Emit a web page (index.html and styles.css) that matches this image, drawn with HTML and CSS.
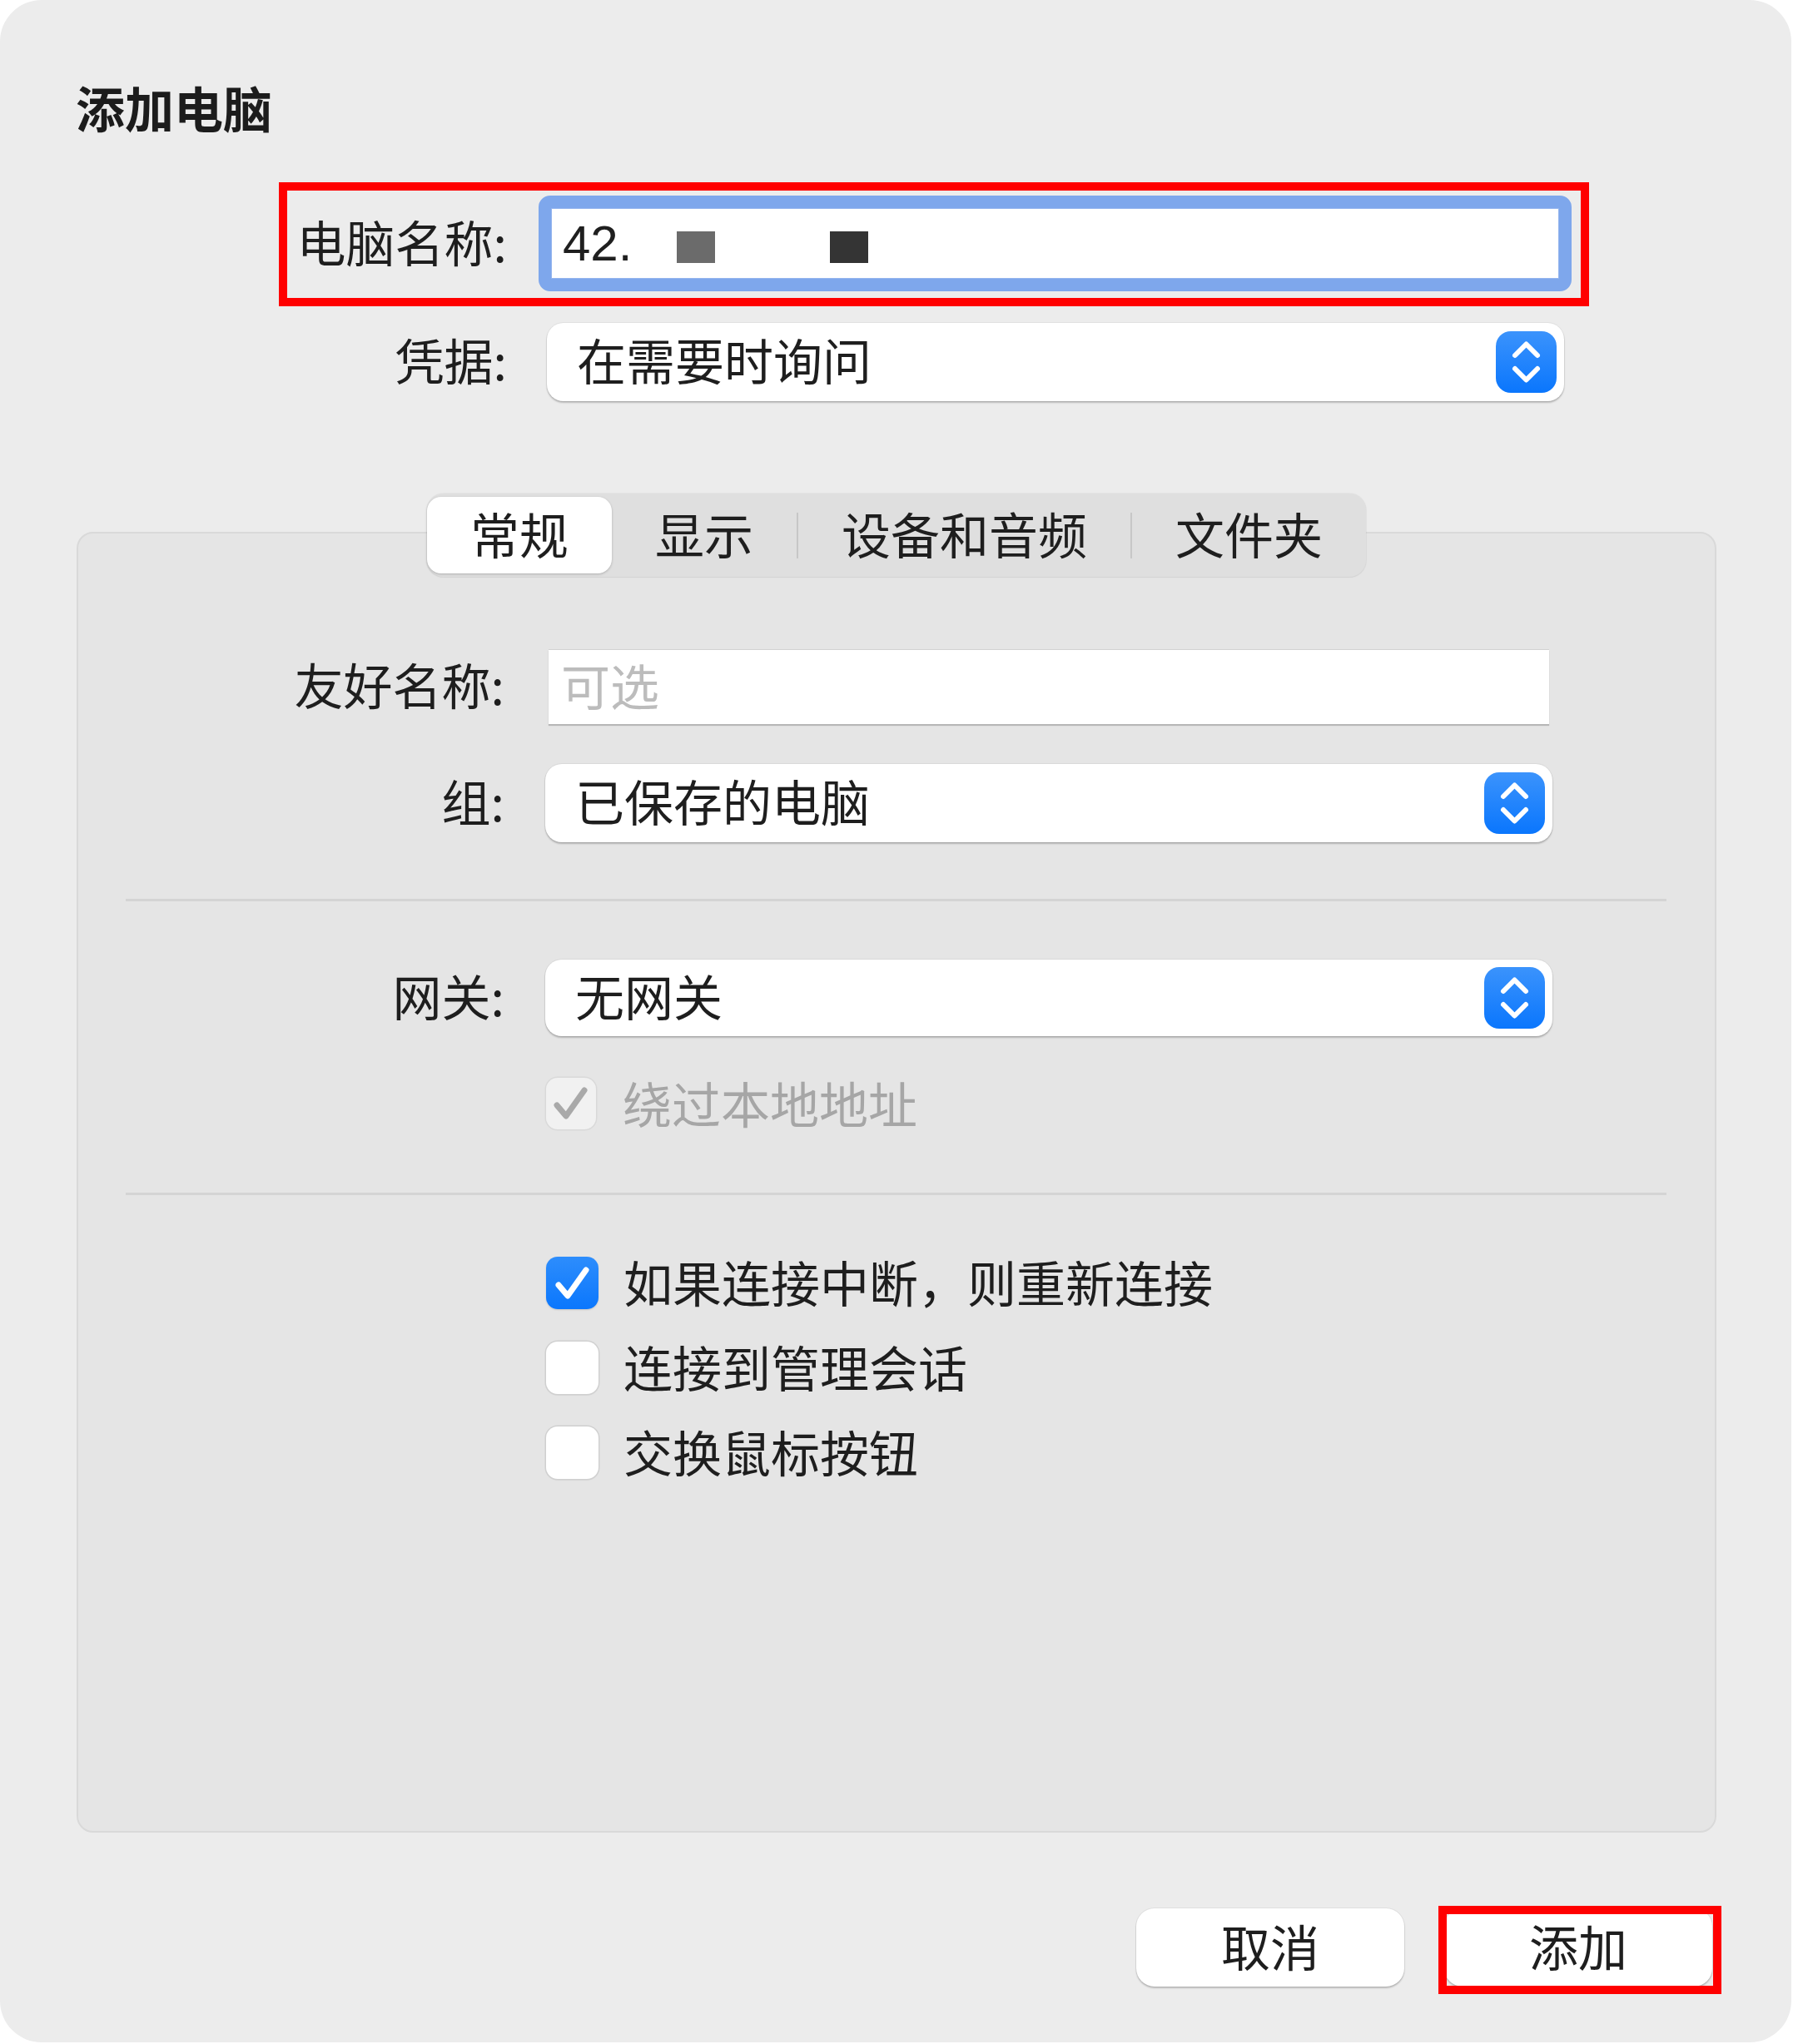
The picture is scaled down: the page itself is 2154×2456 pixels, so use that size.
FILE: index.html
```html
<!DOCTYPE html>
<html lang="zh-CN">
<head>
<meta charset="utf-8">
<title>添加电脑</title>
<link rel="stylesheet" href="styles.css">
</head>
<body>
<div class="dialog">
  <h1 class="title">添加电脑</h1>

  <div class="row top-row row-name">
    <span class="label">电脑名称:</span>
    <div class="namefield">
      <span class="ip">42.</span>
      <span class="redact redact-light"></span>
      <span class="redact redact-dark"></span>
    </div>
  </div>

  <div class="row top-row row-cred">
    <span class="label">凭据:</span>
    <div class="popup popup-cred">
      <span class="popup-text">在需要时询问</span>
      <span class="stepper"><svg width="73" height="74" viewBox="0 0 73 74"><path d="M23 29L36.5 15.5L50 29M23 45L36.5 58.5L50 45" fill="none" stroke="#fff" stroke-width="6" stroke-linecap="round" stroke-linejoin="round"/></svg></span>
    </div>
  </div>

  <div class="tabview">
    <div class="tabs">
      <div class="seg-control">
        <div class="seg active">常规</div>
        <div class="seg">显示</div>
        <i class="seg-sep"></i>
        <div class="seg">设备和音频</div>
        <i class="seg-sep"></i>
        <div class="seg">文件夹</div>
      </div>
    </div>

    <div class="panel">
      <div class="row row-friendly">
        <span class="label">友好名称:</span>
        <div class="textfield"><span class="placeholder">可选</span></div>
      </div>

      <div class="row row-group">
        <span class="label">组:</span>
        <div class="popup popup-panel">
          <span class="popup-text">已保存的电脑</span>
          <span class="stepper"><svg width="73" height="74" viewBox="0 0 73 74"><path d="M23 29L36.5 15.5L50 29M23 45L36.5 58.5L50 45" fill="none" stroke="#fff" stroke-width="6" stroke-linecap="round" stroke-linejoin="round"/></svg></span>
        </div>
      </div>

      <div class="separator sep-first"></div>

      <div class="row row-gateway">
        <span class="label">网关:</span>
        <div class="popup popup-panel popup-gateway">
          <span class="popup-text">无网关</span>
          <span class="stepper"><svg width="73" height="74" viewBox="0 0 73 74"><path d="M23 29L36.5 15.5L50 29M23 45L36.5 58.5L50 45" fill="none" stroke="#fff" stroke-width="6" stroke-linecap="round" stroke-linejoin="round"/></svg></span>
        </div>
      </div>

      <div class="check-row check-disabled">
        <span class="cb cb-disabled"><svg width="60" height="62" viewBox="0 0 60 62"><path d="M13 33L24 46L46 15" fill="none" stroke="#a9a9a9" stroke-width="7" stroke-linecap="round" stroke-linejoin="round"/></svg></span>
        <span class="cb-text">绕过本地地址</span>
      </div>

      <div class="separator sep-second"></div>

      <div class="check-row check-first">
        <span class="cb cb-on"><svg width="63" height="63" viewBox="0 0 63 63"><path d="M15 34L26 47L48 16" fill="none" stroke="#fff" stroke-width="7" stroke-linecap="round" stroke-linejoin="round"/></svg></span>
        <span class="cb-text">如果连接中断，则重新连接</span>
      </div>
      <div class="check-row check-next">
        <span class="cb cb-off"></span>
        <span class="cb-text">连接到管理会话</span>
      </div>
      <div class="check-row check-next">
        <span class="cb cb-off"></span>
        <span class="cb-text">交换鼠标按钮</span>
      </div>
    </div>
  </div>

  <div class="buttons">
    <div class="btn">取消</div>
    <div class="btn btn-add">添加</div>
  </div>
</div>
</body>
</html>
```

FILE: styles.css
```css
*, *::before, *::after { box-sizing: border-box; }

html, body {
  margin: 0;
  background: #ffffff;
}

body {
  font-family: "Noto Sans CJK SC", sans-serif;
  color: #1e1e1e;
}

.dialog {
  width: 2152px;
  height: 2454px;
  background: #ececec;
  border-radius: 50px;
  padding-top: 94px;
  display: flex;
  flex-direction: column;
}

.title {
  margin: 0 0 0 91px;
  font-size: 59px;
  font-weight: 700;
  line-height: 70px;
  color: #1c1c1c;
}

.row {
  display: flex;
  align-items: center;
}

.label {
  flex: none;
  text-align: right;
  font-size: 59px;
  line-height: 70px;
  padding-bottom: 6px;
  white-space: nowrap;
}

.top-row .label { width: 609px; }

/* computer name */
.row-name {
  margin-top: 71px;
  position: relative;
}

.row-name::after {
  content: "";
  position: absolute;
  left: 335px;
  top: -16px;
  width: 1574px;
  height: 149px;
  border: 10px solid #ff0000;
  pointer-events: none;
}

.namefield {
  margin-left: 38px;
  width: 1241px;
  height: 115px;
  border: 15px solid #7ea7ec;
  border-radius: 14px;
  background: #ffffff;
  box-shadow: inset 0 0 0 1px #93b4ee;
  display: flex;
  align-items: center;
  padding-left: 14px;
}

.ip {
  font-family: "Liberation Sans", Arial, sans-serif;
  font-size: 60px;
  line-height: 70px;
  color: #1f1f1f;
}

.redact {
  width: 46px;
  height: 38px;
  margin-top: 8px;
  box-shadow: -14px 0 10px rgba(255,255,255,0.9);
}

.redact-light {
  margin-left: 54px;
  background: #6b6b6b;
}

.redact-dark {
  margin-left: 138px;
  background: #343434;
}

/* popups */
.popup {
  display: flex;
  align-items: center;
  justify-content: space-between;
  height: 94px;
  background: #ffffff;
  border-radius: 20px;
  box-shadow: 0 0 0 1px rgba(0,0,0,0.05), 0 2px 2px rgba(0,0,0,0.22);
  padding: 0 9px 0 36px;
}

.popup-text {
  font-size: 59px;
  line-height: 70px;
  padding-bottom: 6px;
}

.row-cred { margin-top: 38px; }

.popup-cred {
  margin-left: 48px;
  width: 1222px;
}

.stepper {
  flex: none;
  width: 73px;
  height: 74px;
  border-radius: 18px;
  background: linear-gradient(#3b93fc, #0a76fd);
  display: flex;
}

/* tabs */
.tabview {
  margin: 111px 0 0 92px;
  width: 1970px;
}

.tabs {
  display: flex;
  justify-content: center;
  position: relative;
  z-index: 1;
  margin-bottom: -54px;
}

.seg-control {
  display: flex;
  align-items: center;
  height: 100px;
  padding: 4px 0;
  background: #dfdfdf;
  border-radius: 20px;
  box-shadow: 0 0 0 1px rgba(0,0,0,0.03), 0 1px 2px rgba(0,0,0,0.06);
}

.seg {
  height: 92px;
  padding: 0 52px 4px;
  font-size: 59px;
  line-height: 88px;
  border-radius: 17px;
  white-space: nowrap;
}

.seg.active {
  background: #ffffff;
  box-shadow: 0 1px 3px rgba(0,0,0,0.22);
}

.seg-sep {
  width: 2px;
  height: 55px;
  background: #c7c7c7;
}

/* panel */
.panel {
  height: 1563px;
  background: #e5e5e5;
  border: 2px solid #d9d9d9;
  border-radius: 20px;
  padding-top: 139px;
}

.panel .label { width: 512px; }

.textfield {
  margin-left: 53px;
  width: 1202px;
  height: 90px;
  background: #ffffff;
  border-top: 1px solid #d2d2d2;
  box-shadow: 0 2px 1px rgba(0,0,0,0.2);
  display: flex;
  align-items: center;
  padding-left: 15px;
}

.placeholder {
  font-size: 59px;
  line-height: 70px;
  padding-bottom: 6px;
  color: #bcbcbc;
}

.row-group { margin-top: 48px; }

.popup-panel {
  margin-left: 49px;
  width: 1210px;
}

.popup-gateway { height: 92px; }

.separator {
  height: 3px;
  background: #d4d4d4;
  margin: 0 58px 0 57px;
}

.sep-first { margin-top: 68px; }
.row-gateway { margin-top: 70px; }

.check-row {
  display: flex;
  align-items: center;
  height: 70px;
  margin-left: 562px;
}

.cb {
  flex: none;
  width: 63px;
  height: 63px;
  border-radius: 14px;
  margin-right: 30px;
  display: flex;
}

.cb-text {
  font-size: 59px;
  line-height: 70px;
  padding-bottom: 2px;
  white-space: nowrap;
}

.check-disabled { margin-top: 46px; }

.cb-disabled {
  width: 60px;
  height: 62px;
  margin-right: 32px;
  background: #f1f1f1;
  box-shadow: 0 0 0 1.5px #d9d9d9;
}

.check-disabled .cb-text { color: #a6a6a6; }

.sep-second { margin-top: 72px; }

.check-first { margin-top: 70px; }
.check-next { margin-top: 32px; }

.cb-on {
  background: linear-gradient(#2d8dfc, #0b77fd);
  box-shadow: 0 1px 2px rgba(0,0,0,0.15);
}

.cb-off {
  background: #ffffff;
  box-shadow: 0 0 0 1.5px #d0d0d0, 0 1px 2px rgba(0,0,0,0.12);
}

/* buttons */
.buttons {
  display: flex;
  justify-content: flex-end;
  gap: 48px;
  margin-top: 91px;
  padding-right: 95px;
}

.btn {
  width: 322px;
  height: 94px;
  background: #ffffff;
  border-radius: 22px;
  font-size: 59px;
  line-height: 70px;
  padding-bottom: 4px;
  display: flex;
  align-items: center;
  justify-content: center;
  box-shadow: 0 0 0 1px rgba(0,0,0,0.05), 0 2px 2px rgba(0,0,0,0.2);
}

.btn-add { position: relative; }

.btn-add::after {
  content: "";
  position: absolute;
  left: -7px;
  top: -3px;
  width: 340px;
  height: 106px;
  border: 10px solid #ff0000;
  pointer-events: none;
}
```
